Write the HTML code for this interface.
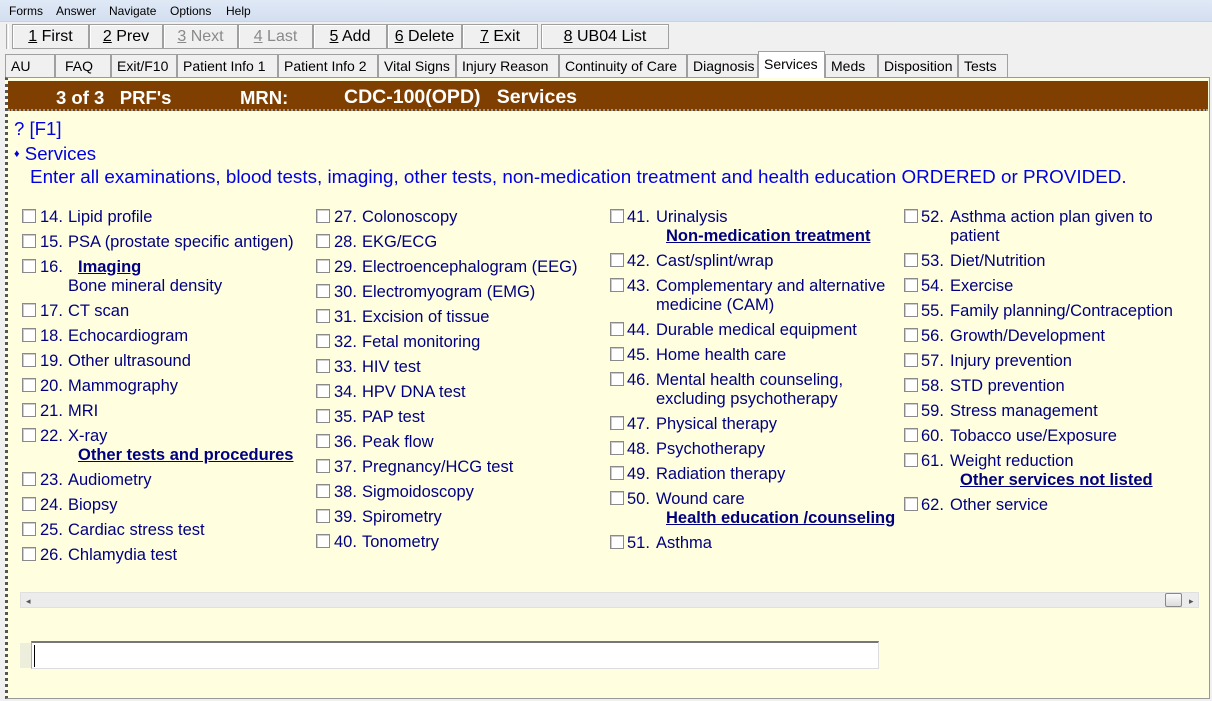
<!DOCTYPE html>
<html><head><meta charset="utf-8"><style>
*{margin:0;padding:0;box-sizing:border-box}
body{width:1212px;height:701px;overflow:hidden;background:#f0f0f0;font-family:"Liberation Sans",Arial,sans-serif;position:relative}
.menu{position:absolute;left:0;top:0;width:1212px;height:22px;background:linear-gradient(#dfe9f6,#d3def0);font-size:12px;border-bottom:1px solid #c8d4e6}
.menu span{position:absolute;top:4px}
.btn{position:absolute;top:24px;height:25px;border:1px solid #a0a0a0;background:#f0f0f0;font-size:16px;text-align:center;line-height:23px;box-shadow:inset 1px 1px #fff}
.btn.d{color:#8a8a8a}
.tab{position:absolute;top:54px;height:23px;border:1px solid #a0a0a0;border-bottom:none;background:#f0f0f0;font-size:14px;line-height:22px;padding-left:5px;white-space:nowrap;overflow:hidden}
.panel{position:absolute;left:5px;top:77px;width:1205px;height:622px;border:1px solid #999;background:#ffffdf;border-left:3px dotted #555}
.hdr{position:absolute;left:8px;top:81px;width:1200px;height:30px;background:#7f3f00;color:#fff;font-weight:bold;font-size:18.5px;border-bottom:2px dotted #999}
.hdr span{position:absolute;top:6px}
.t{position:absolute;font-size:16.5px;color:#000080;white-space:nowrap;line-height:19px}
.cb{position:absolute;width:14px;height:14px;border:1px solid #8a8a8a;background:#fff;box-shadow:inset 1px 1px #ccc}
.h{position:absolute;font-size:16.5px;font-weight:bold;text-decoration:underline;color:#000080;line-height:19px;white-space:nowrap}
.b{color:#0000e0;position:absolute;font-size:18.6px;line-height:20px;white-space:nowrap}
</style></head><body>
<div class="menu"><span style="left:9px">Forms</span><span style="left:56px">Answer</span><span style="left:109px">Navigate</span><span style="left:170px">Options</span><span style="left:226px">Help</span></div>
<div style="position:absolute;left:6px;top:24px;width:3px;height:25px;border-left:1px solid #aaa;border-right:1px solid #fff"></div>
<div class="btn" style="left:12px;width:77px"><u>1</u> First</div>
<div class="btn" style="left:89px;width:74px"><u>2</u> Prev</div>
<div class="btn d" style="left:163px;width:75px"><u>3</u> Next</div>
<div class="btn d" style="left:238px;width:75px"><u>4</u> Last</div>
<div class="btn" style="left:313px;width:74px"><u>5</u> Add</div>
<div class="btn" style="left:387px;width:75px"><u>6</u> Delete</div>
<div class="btn" style="left:462px;width:76px"><u>7</u> Exit</div>
<div class="btn" style="left:541px;width:128px"><u>8</u> UB04 List</div>
<div class="tab" style="left:5px;width:50px">AU</div>
<div class="tab" style="left:55px;width:56px;padding-left:9px">FAQ</div>
<div class="tab" style="left:111px;width:66px">Exit/F10</div>
<div class="tab" style="left:177px;width:101px">Patient Info 1</div>
<div class="tab" style="left:278px;width:100px">Patient Info 2</div>
<div class="tab" style="left:378px;width:78px">Vital Signs</div>
<div class="tab" style="left:456px;width:103px">Injury Reason</div>
<div class="tab" style="left:559px;width:128px">Continuity of Care</div>
<div class="tab" style="left:687px;width:71px">Diagnosis</div>
<div class="tab" style="left:825px;width:53px">Meds</div>
<div class="tab" style="left:878px;width:80px">Disposition</div>
<div class="tab" style="left:958px;width:50px">Tests</div>
<div class="panel"></div>
<div class="tab" style="left:758px;top:51px;height:27px;width:67px;background:#fff;line-height:24px">Services</div>
<div class="hdr"><span style="left:48px">3 of 3&nbsp;&nbsp; PRF's</span><span style="left:232px">MRN:</span><span style="left:336px;font-size:19.5px;top:5px">CDC-100(OPD)&nbsp;&nbsp; Services</span></div>
<div class="b" style="left:14px;top:119px">? [F1]</div>
<div class="b" style="left:14px;top:144px"><span style="font-size:11px;position:relative;top:-3px">♦</span> Services</div>
<div class="b" style="left:30px;top:167px;font-size:18.85px">Enter all examinations, blood tests, imaging, other tests, non-medication treatment and health education ORDERED or PROVIDED.</div>
<div id="items"></div>
<div style="position:absolute;left:20px;top:592px;width:1179px;height:16px;background:#ececec;border:1px solid #e0e0e0"></div>
<div style="position:absolute;left:26px;top:596px;font-size:9px;color:#555">◂</div>
<div style="position:absolute;left:1189px;top:596px;font-size:9px;color:#555">▸</div>
<div style="position:absolute;left:1165px;top:593px;width:17px;height:14px;border:1px solid #888;border-radius:2px;background:linear-gradient(#fafafa,#dcdcdc)"></div>
<div style="position:absolute;left:20px;top:643px;width:12px;height:25px;background:#eeeedd"></div>
<div style="position:absolute;left:31px;top:641px;width:848px;height:28px;background:#fff;border-top:2px solid #777;border-bottom:1px solid #ddd;border-right:1px solid #ddd;border-left:1px solid #aaa"></div>
<div style="position:absolute;left:34px;top:645px;width:1px;height:22px;background:#000"></div>
<script>
var cols=[[22,40,68],[316,334,362],[610,627,656],[904,921,950]];
var d=[
[[217,"14.","Lipid profile"],[242,"15.","PSA (prostate specific antigen)"],[267,"16.",""],[-267,"Imaging",78],[-286,"","Bone mineral density"],[311,"17.","CT scan"],[336,"18.","Echocardiogram"],[361,"19.","Other ultrasound"],[386,"20.","Mammography"],[411,"21.","MRI"],[436,"22.","X-ray"],[-455,"Other tests and procedures",78],[480,"23.","Audiometry"],[505,"24.","Biopsy"],[530,"25.","Cardiac stress test"],[555,"26.","Chlamydia test"]],
[],
[[217,"41.","Urinalysis"],[-236,"Non-medication treatment",666],[261,"42.","Cast/splint/wrap"],[286,"43.","Complementary and alternative"],[-305,"","medicine (CAM)"],[330,"44.","Durable medical equipment"],[355,"45.","Home health care"],[380,"46.","Mental health counseling,"],[-399,"","excluding psychotherapy"],[424,"47.","Physical therapy"],[449,"48.","Psychotherapy"],[474,"49.","Radiation therapy"],[499,"50.","Wound care"],[-518,"Health education /counseling",666],[543,"51.","Asthma"]],
[[217,"52.","Asthma action plan given to"],[-236,"","patient"],[261,"53.","Diet/Nutrition"],[286,"54.","Exercise"],[311,"55.","Family planning/Contraception"],[336,"56.","Growth/Development"],[361,"57.","Injury prevention"],[386,"58.","STD prevention"],[411,"59.","Stress management"],[436,"60.","Tobacco use/Exposure"],[461,"61.","Weight reduction"],[-480,"Other services not listed",960],[505,"62.","Other service"]]];
var c2=["Colonoscopy","EKG/ECG","Electroencephalogram (EEG)","Electromyogram (EMG)","Excision of tissue","Fetal monitoring","HIV test","HPV DNA test","PAP test","Peak flow","Pregnancy/HCG test","Sigmoidoscopy","Spirometry","Tonometry"];
c2.forEach(function(s,i){d[1].push([217+25*i,(27+i)+".",s]);});
var h="";
d.forEach(function(col,ci){var c=cols[ci];col.forEach(function(it){
 if(it[0]<0){var y=-it[0]-9;
  if(typeof it[2]=="number")h+='<div class="h" style="left:'+it[2]+'px;top:'+y+'px">'+it[1]+'</div>';
  else h+='<div class="t" style="left:'+c[2]+'px;top:'+y+'px">'+it[2]+'</div>';
 }else{var y=it[0]-9;
  h+='<div class="cb" style="left:'+c[0]+'px;top:'+(it[0]-8)+'px"></div>';
  h+='<div class="t" style="left:'+c[1]+'px;top:'+y+'px">'+it[1]+'</div>';
  if(it[2])h+='<div class="t" style="left:'+c[2]+'px;top:'+y+'px">'+it[2]+'</div>';}
});});
document.getElementById("items").innerHTML=h;
</script>
</body></html>
